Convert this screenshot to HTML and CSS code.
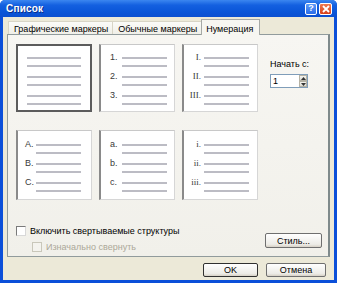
FILE: index.html
```html
<!DOCTYPE html>
<html>
<head>
<meta charset="utf-8">
<link rel="stylesheet" href="styles.css">
</head>
<body>
<div class="window">
  <div class="titlebar">
    <span class="title">Список</span>
    <div class="tb-buttons">
      <span class="tb-btn help">?</span>
      <span class="tb-btn close"><svg width="8" height="8" viewBox="0 0 8 8"><path d="M1 1L7 7M7 1L1 7" stroke="#fff" stroke-width="1.8"/></svg></span>
    </div>
  </div>
  <div class="client">
    <div class="tabs">
      <div class="tab">Графические маркеры</div>
      <div class="tab">Обычные маркеры</div>
      <div class="tab active">Нумерация</div>
    </div>
    <div class="panel">
      <div class="top">
        <div class="grid">
          <div class="box none selected">
            <div class="row"><div class="lines"><i></i><i></i></div></div>
            <div class="row"><div class="lines"><i></i><i></i></div></div>
            <div class="row"><div class="lines"><i></i><i></i></div></div>
          </div>
          <div class="box arabic">
            <div class="row"><span class="lbl">1.</span><div class="lines"><i></i><i></i></div></div>
            <div class="row"><span class="lbl">2.</span><div class="lines"><i></i><i></i></div></div>
            <div class="row"><span class="lbl">3.</span><div class="lines"><i></i><i></i></div></div>
          </div>
          <div class="box roman">
            <div class="row"><span class="lbl">I.</span><div class="lines"><i></i><i></i></div></div>
            <div class="row"><span class="lbl">II.</span><div class="lines"><i></i><i></i></div></div>
            <div class="row"><span class="lbl">III.</span><div class="lines"><i></i><i></i></div></div>
          </div>
          <div class="box upper tall">
            <div class="row"><span class="lbl">A.</span><div class="lines"><i></i><i></i></div></div>
            <div class="row"><span class="lbl">B.</span><div class="lines"><i></i><i></i></div></div>
            <div class="row"><span class="lbl">C.</span><div class="lines"><i></i><i></i></div></div>
          </div>
          <div class="box arabic tall">
            <div class="row"><span class="lbl">a.</span><div class="lines"><i></i><i></i></div></div>
            <div class="row"><span class="lbl">b.</span><div class="lines"><i></i><i></i></div></div>
            <div class="row"><span class="lbl">c.</span><div class="lines"><i></i><i></i></div></div>
          </div>
          <div class="box roman tall">
            <div class="row"><span class="lbl">i.</span><div class="lines"><i></i><i></i></div></div>
            <div class="row"><span class="lbl">ii.</span><div class="lines"><i></i><i></i></div></div>
            <div class="row"><span class="lbl">iii.</span><div class="lines"><i></i><i></i></div></div>
          </div>
        </div>
        <div class="start">
          <div class="start-label">Начать с:</div>
          <div class="spin">
            <span class="spin-val">1</span>
            <div class="spin-btns">
              <span class="sb"><svg width="5" height="3" viewBox="0 0 5 3"><path d="M0 3L2.5 0L5 3Z" fill="#333"/></svg></span>
              <span class="sb"><svg width="5" height="3" viewBox="0 0 5 3"><path d="M0 0L2.5 3L5 0Z" fill="#333"/></svg></span>
            </div>
          </div>
        </div>
      </div>
      <div class="bottom">
        <div class="checks">
          <div class="check"><span class="cb"></span>Включить свертываемые структуры</div>
          <div class="check sub disabled"><span class="cb"></span>Изначально свернуть</div>
        </div>
        <div class="btn style-btn">Стиль...</div>
      </div>
    </div>
    <div class="footer">
      <div class="btn ok">OK</div>
      <div class="btn cancel">Отмена</div>
    </div>
  </div>
</div>
</body>
</html>
```

FILE: styles.css
```css
* { box-sizing: border-box; }
html, body { margin: 0; padding: 0; background: #ffffff; }
body { font-family: "Liberation Sans", Arial, sans-serif; font-size: 9px; color: #000; }

.window {
  width: 337px; height: 283px;
  background: #0b4fd9;
  border-radius: 5px 5px 0 0;
  display: flex; flex-direction: column;
  overflow: hidden;
}
.titlebar {
  height: 17px; flex: none;
  display: flex; align-items: center; justify-content: space-between;
  padding: 0 5px 0 6px;
  background: linear-gradient(to bottom, #3b86f0 0%, #1460e0 30%, #0a55d8 70%, #0b4fd0 100%);
}
.title { color: #fff; font-weight: bold; font-size: 10px; letter-spacing: 0.2px; text-shadow: 1px 1px 0 #0a2f8a; }
.tb-buttons { display: flex; gap: 2px; }
.tb-btn {
  width: 12px; height: 12px; border: 1px solid #fff; border-radius: 2px;
  display: flex; align-items: center; justify-content: center;
  color: #fff; font-weight: bold; font-size: 9px; line-height: 1;
}
.help { background: linear-gradient(to bottom, #5d9bf8, #2a6ce8); }
.close { width: 13px; background: linear-gradient(to bottom, #ee7a50, #d7401c); }

.client {
  flex: 1; margin: 0 3px 3px 3px;
  background: #ece9d8;
  display: flex; flex-direction: column;
}
.tabs { display: flex; align-items: flex-end; height: 17px; padding-left: 5px; }
.tab {
  height: 13px; padding: 2px 4px 0 5px;
  border: 1px solid #d8d5c6; border-bottom: none;
  background: linear-gradient(to bottom, #fbfbf8, #f0efe8);
  margin-right: -1px;
  white-space: nowrap; line-height: 10px;
}
.tab.active {
  height: 16px; padding-top: 4px; background: #f7f6f1;
  border-color: #a6a9a6;
  position: relative; z-index: 2; margin-bottom: -1px;
  padding-left: 4px; padding-right: 6px;
}
.panel {
  margin-left: 4px; width: 323px; height: 223px; flex: none;
  border: 1px solid #919b9c; border-right: 2px solid #7f8a8b;
  background: linear-gradient(to bottom, #f7f6f2, #f1f0ea);
  padding: 9px 6px 0 8px;
  display: flex; flex-direction: column;
}
.top { display: flex; }
.grid {
  display: grid; grid-template-columns: repeat(3, 76px);
  grid-template-rows: 68px 70px;
  column-gap: 7px; row-gap: 18px;
}
.box {
  background: #fff;
  border-top: 1px solid #c8c8c8; border-left: 2px solid #8a8a8a;
  border-right: 1px solid #d6d6d6; border-bottom: 1px solid #d6d6d6;
  padding-top: 8px;
  display: flex; flex-direction: column;
}
.box.selected { border: 2px solid #5c5c5c; padding-top: 7px; }
.box.tall { padding-top: 9px; }
.row { height: 19px; display: flex; align-items: flex-start; }
.lbl { font-size: 9px; line-height: 9px; color: #3a3a3a; }
.lines { width: 45px; display: flex; flex-direction: column; padding-top: 4px; }
.lines i { display: block; height: 2px; background: #bcbcc4; }
.lines i + i { margin-top: 6px; }

.none .lines { width: 54px; margin-left: 9px; padding-top: 4px; }
.arabic .lbl { width: 12px; margin-left: 9px; }
.roman .lbl { width: 18px; text-align: right; font-family: "Liberation Serif", serif; padding-right: 1px; }
.roman .lines { margin-left: 2px; }
.upper .lbl { width: 11px; margin-left: 7px; }

.start { margin-left: 12px; padding-top: 15px; }
.start-label { line-height: 11px; white-space: nowrap; }
.spin {
  margin-top: 4px; width: 38px; height: 14px;
  border: 1px solid #7f9db9; background: #fff;
  display: flex;
}
.spin-val { flex: 1; padding-left: 2px; line-height: 12px; font-size: 9px; }
.spin-btns { width: 8px; display: flex; flex-direction: column; }
.sb {
  flex: 1; background: linear-gradient(to bottom, #f6f5f0, #dcdad0);
  border: 1px solid #b5b2a4; display: flex; align-items: center; justify-content: center;
}

.bottom { display: flex; justify-content: space-between; margin-top: 24px; }
.check { display: flex; align-items: center; height: 13px; white-space: nowrap; }
.check.sub { margin-top: 3px; margin-left: 16px; }
.cb {
  width: 10px; height: 10px; margin-right: 4px; background: #fff;
  border: 1px solid #7a7a7a; border-right-color: #d8d8d8; border-bottom-color: #d8d8d8;
}
.disabled { color: #aca899; }
.disabled .cb { border-color: #c9c7ba; background: #f4f3ee; }

.btn {
  height: 15px; border: 1px solid #6f6f6f; border-radius: 2px;
  background: linear-gradient(to bottom, #ffffff, #ecebe6 80%, #d6d0c5);
  display: flex; align-items: center; justify-content: center;
  white-space: nowrap;
}
.style-btn { width: 57px; margin-top: 9px; }
.footer { display: flex; justify-content: flex-end; gap: 8px; padding: 6px 8px 0 0; }
.ok { width: 55px; height: 14px; border-color: #303030; }
.cancel { width: 60px; height: 14px; }
```
